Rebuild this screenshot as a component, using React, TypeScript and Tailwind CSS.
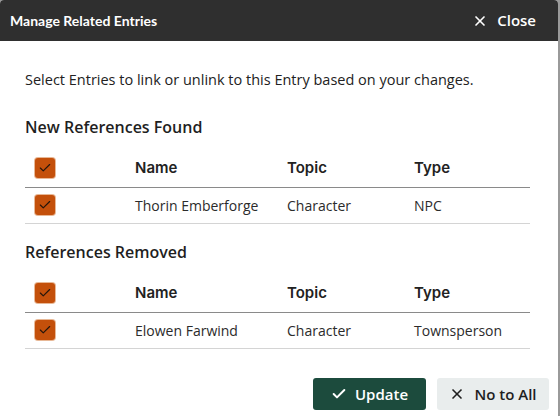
import { Check, X } from "lucide-react"

const font = { fontFamily: '"Open Sans", "Noto Sans", sans-serif' }

function Box() {
  return (
    <span className="flex h-5 w-5 items-center justify-center rounded-[3px] bg-[#c4500b] shadow-[0_0_0_1px_#e8b896]">
      <Check className="h-3.5 w-3.5 text-[#24150c]" strokeWidth={2} />
    </span>
  )
}

function RefTable({ rows }: { rows: string[][] }) {
  return (
    <div className="mr-[28px] font-['Inter',sans-serif]">
      <div className="grid h-[38px] grid-cols-[110px_152px_127px_1fr] items-center border-b border-[#8a8a8a]">
        <div className="pl-[10px]"><Box /></div>
        <div className="text-[15px] font-semibold text-[#222]">Name</div>
        <div className="text-[15px] font-semibold text-[#222]">Topic</div>
        <div className="text-[15px] font-semibold text-[#222]">Type</div>
      </div>
      {rows.map((r, i) => (
        <div key={i} className="grid h-[36px] grid-cols-[110px_152px_127px_1fr] items-center border-b border-[#d4d4d4] text-[14px] text-[#2b2b2b]" style={font}>
          <div className="pl-[10px]"><Box /></div>
          <div>{r[0]}</div>
          <div>{r[1]}</div>
          <div>{r[2]}</div>
        </div>
      ))}
    </div>
  )
}

export default function App() {
  return (
    <div className="h-[416px] w-[560px] bg-[#9a9a9a]" style={font}>
      <div className="h-full w-[558px] overflow-hidden rounded-t-[4px] bg-white">
        <div className="flex h-[41px] items-center justify-between bg-[#2f2f2f] pl-[10px] pr-[22px] text-white">
          <span className="font-['Lato',sans-serif] text-[14px] font-bold">Manage Related Entries</span>
          <button className="flex items-center gap-[9px] text-[15px] font-semibold">
            <X className="h-4 w-4" strokeWidth={2.5} />
            Close
          </button>
        </div>
        <div className="pl-[25px] pt-[28px]">
          <p className="text-[14.5px] text-[#222]">Select Entries to link or unlink to this Entry based on your changes.</p>
          <h2 className="mt-[24px] text-[16px] font-semibold text-[#1f1f1f]">New References Found</h2>
          <div className="mt-[11px]">
            <RefTable rows={[["Thorin Emberforge", "Character", "NPC"]]} />
          </div>
          <h2 className="mt-[16px] text-[16px] font-semibold text-[#1f1f1f]">References Removed</h2>
          <div className="mt-[11px]">
            <RefTable rows={[["Elowen Farwind", "Character", "Townsperson"]]} />
          </div>
        </div>
        <div className="mt-[29px] flex justify-end gap-[11px] pr-[9px]">
          <button className="flex h-[32px] w-[113px] items-center justify-center gap-[8px] rounded-[3px] bg-[#1c4b3d] text-[15px] font-semibold text-white">
            <Check className="h-4 w-4" strokeWidth={3} />
            Update
          </button>
          <button className="flex h-[32px] w-[112px] items-center justify-center gap-[9px] rounded-[3px] bg-[#e9eded] text-[15px] font-semibold text-[#1f1f1f]">
            <X className="h-4 w-4" strokeWidth={2.5} />
            No to All
          </button>
        </div>
      </div>
    </div>
  )
}
